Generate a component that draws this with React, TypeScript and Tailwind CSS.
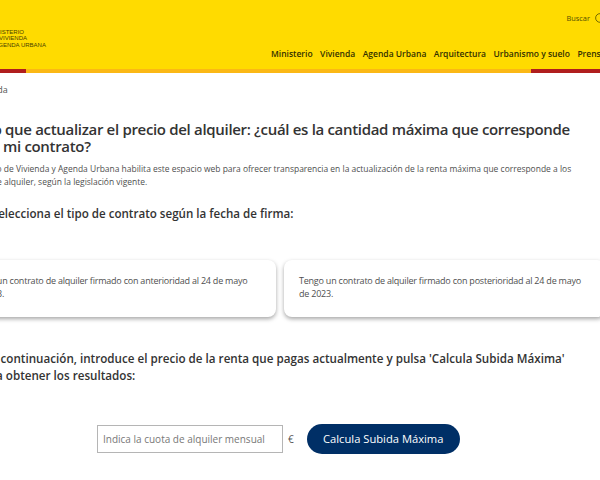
import React from 'react';
import { Search } from 'lucide-react';

const navItems = ['Ministerio', 'Vivienda', 'Agenda Urbana', 'Arquitectura', 'Urbanismo y suelo', 'Prensa'];

export default function App() {
  return (
    <div className="w-[600px] h-[480px] overflow-hidden bg-white text-[#333333] font-['Open_Sans',sans-serif]">
      <header className="relative h-[69px] bg-[#ffdb00]">
        <div className="flex justify-end items-center gap-[4px] pt-[11px] h-[25px] w-[640px] pr-[33px]">
          <span className="text-[7.4px] leading-[12px] text-[#555000]">Buscar</span>
          <Search size={13} strokeWidth={1.5} className="text-[#555000]" />
        </div>
        <div className="absolute left-[-11px] top-[29px] text-[6px] leading-[6.4px] uppercase text-[#4a4200] font-['Liberation_Sans',sans-serif]">
          <div>Ministerio</div>
          <div>de Vivienda</div>
          <div>y Agenda Urbana</div>
        </div>
        <nav className="flex gap-[7.5px] pl-[271px] pt-[21px] w-[700px] text-[8.5px] leading-[15px] font-semibold text-[#333000] whitespace-nowrap">
          {navItems.map((item) => (
            <span key={item}>{item}</span>
          ))}
        </nav>
      </header>

      <div className="flex h-[4px] bg-[#fbb815]">
        <div className="w-[26px] bg-[#b01e1e]" />
        <div className="flex-1" />
        <div className="w-[69px] bg-[#b01e1e]" />
      </div>

      <main className="w-[760px] -ml-[62px]">
        <p className="pl-[4px] pt-[10px] text-[9px] leading-[14px] text-[#555555]">Inicio / Vivienda</p>

        <h1 className="pl-[21px] pt-[24px] w-[700px] text-[15px] tracking-[-0.32px] leading-[17px] font-semibold">
          Tengo que actualizar el precio del alquiler: ¿cuál es la cantidad máxima que corresponde
          <br />
          <span className="pl-[32px]">a mi contrato?</span>
        </h1>

        <p className="mt-[7px] pl-[14px] indent-[1px] w-[654px] text-[8.48px] leading-[13px] text-[#4f4f4f]">
          El Ministerio de Vivienda y Agenda Urbana habilita este espacio web para ofrecer transparencia en la actualización de la renta máxima que corresponde a los contratos de alquiler, según la legislación vigente.
        </p>

        <h2 className="pl-[41px] mt-[18px] text-[11.6px] leading-[16px] font-semibold">
          1. Selecciona el tipo de contrato según la fecha de firma:
        </h2>

        <div className="flex gap-[8px] pl-[17px] mt-[38px]">
          <div className="w-[321px] h-[57px] rounded-lg bg-white pl-[15px] pr-[18px] py-[14px] shadow-[0_2px_4px_rgba(0,0,0,0.35)] text-[9px] tracking-[-0.22px] leading-[13px] text-[#4f4f4f]">
            Tengo un contrato de alquiler firmado con anterioridad al 24 de mayo de 2023.
          </div>
          <div className="w-[321px] h-[57px] rounded-lg bg-white pl-[15px] pr-[18px] py-[14px] shadow-[0_2px_4px_rgba(0,0,0,0.35)] text-[9px] tracking-[-0.22px] leading-[13px] text-[#4f4f4f]">
            Tengo un contrato de alquiler firmado con posterioridad al 24 de mayo de 2023.
          </div>
        </div>

        <h2 className="pl-[39px] mt-[33px] w-[640px] text-[11.65px] leading-[17px] font-semibold">
          2. A continuación, introduce el precio de la renta que pagas actualmente y pulsa 'Calcula Subida Máxima' para obtener los resultados:
        </h2>

        <div className="flex items-center pl-[159px] mt-[40px]">
          <input
            placeholder="Indica la cuota de alquiler mensual"
            className="w-[186px] h-[28px] border border-[#b5b5b5] px-[5px] text-[10px] placeholder:text-[#777777]"
          />
          <span className="ml-[5px] text-[10px] text-[#555555]">€</span>
          <button className="ml-[13px] w-[153px] h-[30px] rounded-full bg-[#002f66] text-white text-[11.2px]">
            Calcula Subida Máxima
          </button>
        </div>
      </main>
    </div>
  );
}
